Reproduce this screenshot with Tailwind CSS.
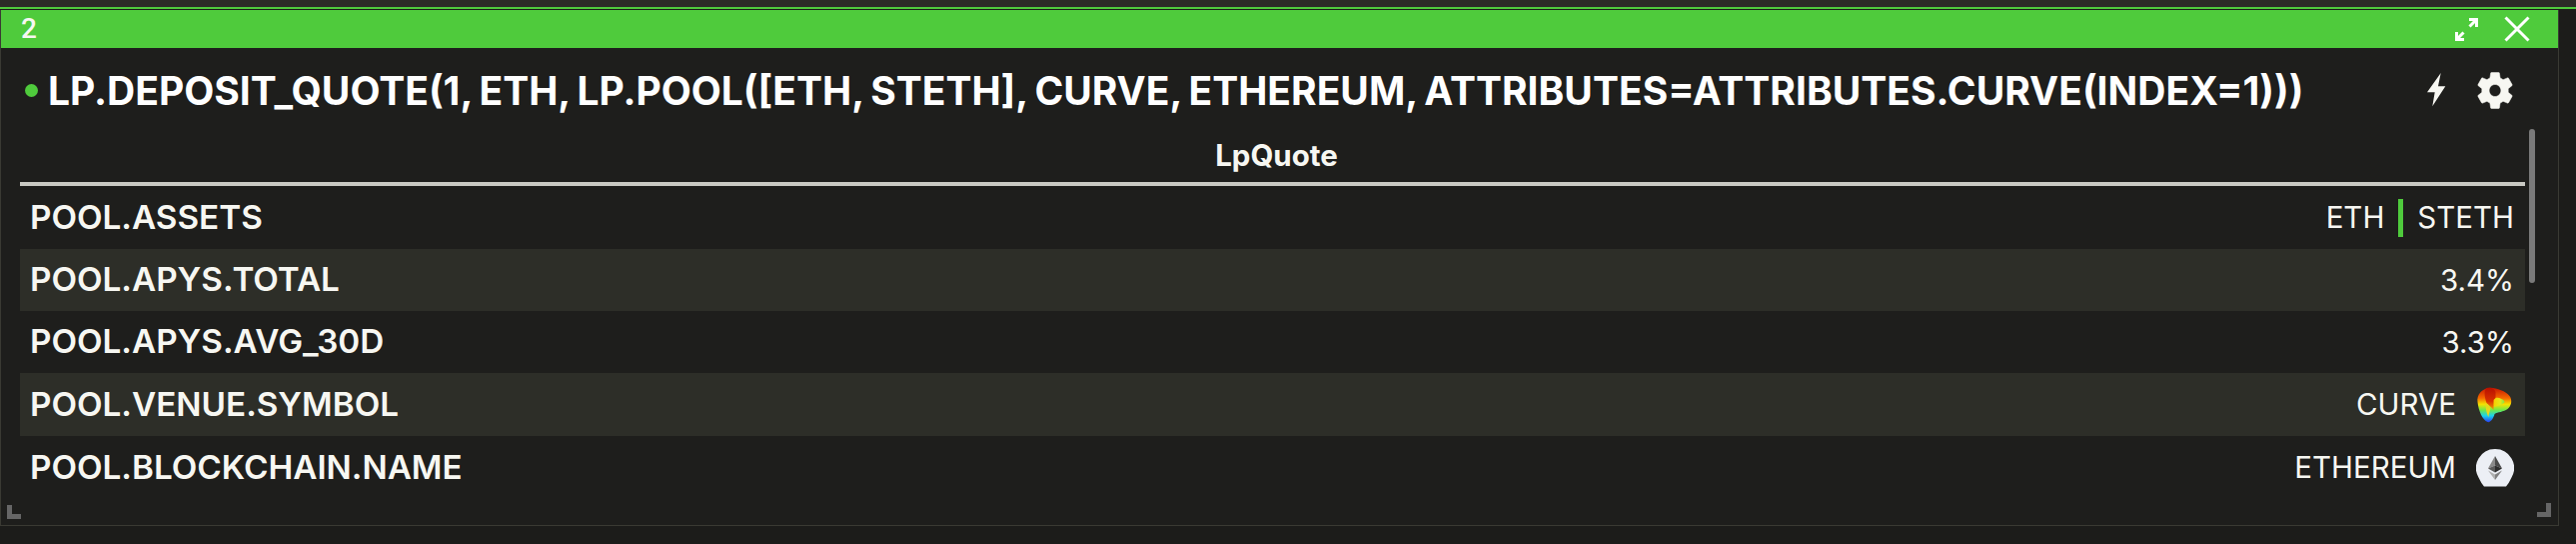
<!DOCTYPE html>
<html lang="en">
<head>
    <meta charset="UTF-8">
    <title>LpQuote</title>
    <script src="https://cdn.jsdelivr.net/npm/@tailwindcss/browser@4"></script>
</head>
<body class="h-[544px] w-[2578px] overflow-hidden bg-[#1c1c1a] font-['Inter',sans-serif] text-[#f7f7f2]">
    <!-- top strip of the parent layout -->
    <div class="h-[7px] bg-[#2c2c27]"></div>
    <div class="h-[2px] bg-[#4fcb3c]"></div>

    <!-- widget window -->
    <div class="relative mt-px h-[516px] w-[2561px] border-x border-b border-[#3a3a33] bg-[#1e1e1c]">
        <!-- title bar -->
        <div class="flex h-[38px] items-center justify-between bg-[#4fcb3c] pl-5 pr-[28px]">
            <span class="font-['Roboto',sans-serif] text-[28px] leading-none font-medium">2</span>
            <div class="flex items-center gap-[26px]">
                <svg class="h-[23px] w-[23px]" viewBox="0 0 23 23" fill="none" stroke="#fff" stroke-width="3">
                    <path d="M14 1.5h7.5V9M21 2l-6.5 6.5M1.500 14v7.500H9M2 21l6.500-6.500"/>
                </svg>
                <svg class="h-[26px] w-[26px]" viewBox="0 0 26 26" fill="none" stroke="#fff" stroke-width="3">
                    <path d="M1.500 1.500l23 23M24.500 1.500l-23 23"/>
                </svg>
            </div>
        </div>

        <!-- query line -->
        <div class="flex h-[84px] items-center justify-between pl-[24px] pr-[45px]">
            <div class="flex items-center gap-[10px]">
                <span class="h-[13px] w-[13px] rounded-full bg-[#4fcb3c]"></span>
                <span class="text-[39px] leading-none font-bold whitespace-nowrap text-white [word-spacing:-2px]">LP.DEPOSIT_QUOTE(1, ETH, LP.POOL([ETH, STETH], CURVE, ETHEREUM, ATTRIBUTES=ATTRIBUTES.CURVE(INDEX=1)))</span>
            </div>
            <div class="flex items-center gap-[31px]">
                <svg class="h-[34px] w-[19px]" viewBox="0 0 19 34" fill="#f7f7f2">
                    <path d="M13.700 0L0 19.300H7.700L5.300 33.300L18.300 13.300H11Z"/>
                </svg>
                <svg class="h-[37px] w-[36px]" viewBox="2.200 2.200 19.600 19.600" preserveAspectRatio="none" fill="#f7f7f2" stroke="#f7f7f2" stroke-width="0.3">
                    <path d="M19.140 12.940c.04-.3.06-.61.06-.94 0-.32-.02-.64-.07-.94l2.030-1.580c.18-.14.23-.41.12-.61l-1.920-3.320c-.12-.22-.37-.29-.59-.22l-2.390.96c-.5-.38-1.030-.7-1.620-.94l-.36-2.540c-.04-.24-.24-.41-.48-.41h-3.840c-.24 0-.43.17-.47.41l-.36 2.540c-.59.24-1.130.57-1.620.94l-2.390-.96c-.22-.08-.47 0-.59.22L2.740 8.870c-.12.21-.08.47.12.61l2.030 1.580c-.05.3-.09.63-.09.94s.02.64.07.94l-2.030 1.580c-.18.14-.23.41-.12.61l1.920 3.320c.12.22.37.29.59.22l2.390-.96c.5.38 1.030.7 1.620.94l.36 2.540c.05.24.24.41.48.41h3.840c.24 0 .44-.17.47-.41l.36-2.540c.59-.24 1.130-.56 1.620-.94l2.390.96c.22.08.47 0 .59-.22l1.920-3.320c.12-.22.07-.47-.12-.61l-2.010-1.580zM12 15.200c-1.760 0-3.200-1.440-3.200-3.200s1.440-3.200 3.200-3.200 3.200 1.440 3.200 3.200-1.440 3.200-3.200 3.200z"/>
                </svg>
            </div>
        </div>

        <!-- table -->
        <div class="ml-[19px] w-[2507px]">
            <div class="flex h-[54px] items-center justify-center border-b-4 border-[#c9c9c3] pb-1 pl-[8px] text-[29.500px] font-bold">LpQuote</div>

            <div class="flex h-[63px] items-center justify-between pl-[10px] pr-[11px]">
                <span class="text-[33.250px] font-semibold">POOL.ASSETS</span>
                <div class="flex items-center text-[29.500px]">
                    <span>ETH</span>
                    <span class="mx-[14px] h-[38px] w-[5px] bg-[#4fcb3c]"></span>
                    <span>STETH</span>
                </div>
            </div>
            <div class="flex h-[62px] items-center justify-between bg-[#2d2e28] pl-[10px] pr-[11px]">
                <span class="text-[33.250px] font-semibold">POOL.APYS.TOTAL</span>
                <span class="text-[29.500px]">3.4%</span>
            </div>
            <div class="flex h-[62px] items-center justify-between pl-[10px] pr-[11px]">
                <span class="text-[33.250px] font-semibold">POOL.APYS.AVG_30D</span>
                <span class="text-[29.500px]">3.3%</span>
            </div>
            <div class="flex h-[63px] items-center justify-between bg-[#2d2e28] pl-[10px] pr-[11px]">
                <span class="text-[33.250px] font-semibold">POOL.VENUE.SYMBOL</span>
                <div class="flex items-center gap-[20px] text-[29.500px]">
                    <span>CURVE</span>
                    <!-- curve logo -->
                    <svg class="mr-[1px] h-[36px] w-[37px]" viewBox="0 0 36 36">
                        <defs>
                            <linearGradient id="curveOuter" x1="0" y1="0" x2="0" y2="1">
                                <stop offset="0" stop-color="#c81500"/>
                                <stop offset="0.3" stop-color="#f56a00"/>
                                <stop offset="0.48" stop-color="#f6e200"/>
                                <stop offset="0.65" stop-color="#6ee84a"/>
                                <stop offset="0.82" stop-color="#19d2ee"/>
                                <stop offset="1" stop-color="#2a3cf0"/>
                            </linearGradient>
                            <linearGradient id="curveLobe" x1="0" y1="0" x2="1" y2="0">
                                <stop offset="0" stop-color="#f6d000"/>
                                <stop offset="0.6" stop-color="#e8e818"/>
                                <stop offset="1" stop-color="#7ae84a"/>
                            </linearGradient>
                            <linearGradient id="curveRed" x1="0" y1="0" x2="0" y2="1">
                                <stop offset="0" stop-color="#b81000"/>
                                <stop offset="0.6" stop-color="#d83000"/>
                                <stop offset="1" stop-color="#f0a000"/>
                            </linearGradient>
                        </defs>
                        <path d="M12 1C18 0 29 4 33 9C36 13 35 19 31 22C27 25 21 25 18 27C17 31 14 36 11 35C6 33 2 24 1 15C0 8 5 2 12 1Z" fill="url(#curveOuter)"/>
                        <path d="M17 11C22 10 27 12 28 15C26 18 21 19 17 20Z" fill="url(#curveLobe)"/>
                        <path d="M10 1C14 0 18 1 19 5V11L17 13V23C15 20 12 18 10 16C8 10 7 4 10 1Z" fill="url(#curveRed)"/>
                        <path d="M9 16C11 17 13 19 14 22C13 25 12 27 12 30C10 27 9 21 9 16Z" fill="#e8d81c"/>
                    </svg>
                </div>
            </div>
            <div class="flex h-[63px] items-center justify-between pl-[10px] pr-[11px]">
                <span class="text-[33.250px] font-semibold">POOL.BLOCKCHAIN.NAME</span>
                <div class="flex items-center gap-[20px] text-[29.500px]">
                    <span>ETHEREUM</span>
                    <!-- ethereum logo, bottom is clipped in the source image -->
                    <svg class="h-[38px] w-[38px]" viewBox="0 0 38 38">
                        <path d="M19 0a19 19 0 0 1 16.500 28.500Q33 34 30 37.500H8Q5 34 2.500 28.500A19 19 0 0 1 19 0Z" fill="#eceff5"/>
                        <path d="M19 7L12 19.500L19 16.500Z" fill="#8a8a8a"/>
                        <path d="M19 7L26 19.500L19 16.500Z" fill="#4a4a4a"/>
                        <path d="M12 19.500L19 16.500V23.500Z" fill="#5a5a5a"/>
                        <path d="M26 19.500L19 16.500V23.500Z" fill="#2c2c2c"/>
                        <path d="M12 21.500L19 25.500V31Z" fill="#b0b0b0"/>
                        <path d="M26 21.500L19 25.500V31Z" fill="#808080"/>
                    </svg>
                </div>
            </div>
        </div>

        <!-- scrollbar -->
        <div class="absolute top-[119px] left-[2530px] h-[154px] w-[6px] rounded-full bg-[#7a7a7a]"></div>
        <!-- resize corners -->
        <div class="absolute top-[495px] left-[6px] h-[14px] w-[14px] border-b-[5px] border-l-[5px] border-[#666]"></div>
        <div class="absolute top-[493px] left-[2538px] h-[14px] w-[14px] border-r-[5px] border-b-[5px] border-[#666]"></div>
    </div>
</body>
</html>
